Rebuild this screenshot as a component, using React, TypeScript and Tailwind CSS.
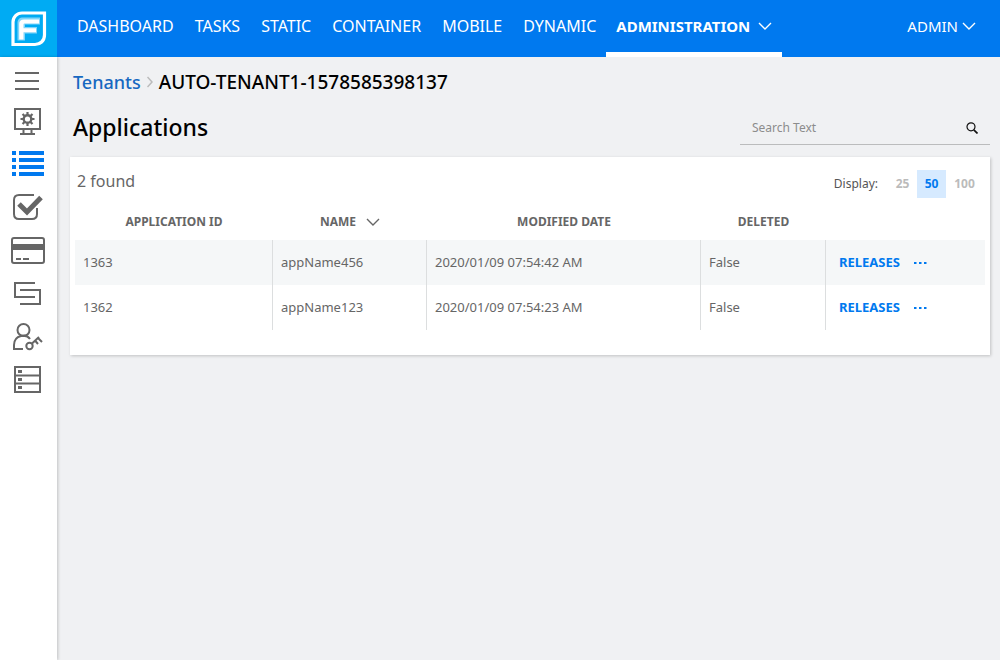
import type { ReactNode } from 'react'

const navItems = ['DASHBOARD', 'TASKS', 'STATIC', 'CONTAINER', 'MOBILE', 'DYNAMIC']

const applications = [
  { id: '1363', name: 'appName456', modified: '2020/01/09 07:54:42 AM', deleted: 'False' },
  { id: '1362', name: 'appName123', modified: '2020/01/09 07:54:23 AM', deleted: 'False' },
]

function Chevron({ className }: { className: string }) {
  return (
    <svg viewBox="0 0 14 8" fill="none" stroke="currentColor" aria-hidden="true" className={className}>
      <path d="M1 1l6 6 6-6" strokeWidth="1.4" />
    </svg>
  )
}

function Logo() {
  return (
    <svg width="36" height="36" viewBox="0 0 36 36" fill="none" aria-hidden="true">
      <path d="M11 2H33.500V24C33.500 30 29 33.500 24 33.500H2V11C2 6 6 2 11 2Z" stroke="#fff" strokeWidth="3.200" />
      <path d="M6.500 29.500V12C6.500 8.500 8.500 6.500 12 6.500H29V13.500H14V16H26V22.500H14V29.500Z" fill="#fff" fillOpacity=".5" />
      <path d="M8.200 28.500V13C8.200 10 9.800 8.500 13 8.500H28V12.500H13.500Q12.500 12.500 12.500 13.500V17.200H25V21.300H12.500V28.500Z" fill="#fff" />
    </svg>
  )
}

function SideIcon({ label, active = false, children }: { label: string; active?: boolean; children: ReactNode }) {
  return (
    <a href="#" aria-label={label} className={`flex h-[43px] w-full items-center justify-center ${active ? 'text-[#0079ef]' : 'text-[#666]'}`}>
      <svg width="36" height="32" viewBox="0 0 36 32" fill="none" stroke="currentColor" strokeWidth="2" aria-hidden="true">
        {children}
      </svg>
    </a>
  )
}

function Sidebar() {
  return (
    <aside className="z-10 flex w-[57px] shrink-0 flex-col items-center bg-white pr-px shadow-[1px_0_3px_rgba(0,0,0,0.2)]">
      <button type="button" aria-label="Toggle menu" className="flex h-[42px] w-full items-center justify-center pt-1.5 pr-0.5 text-[#666]">
        <svg width="24" height="20" viewBox="0 0 24 20" stroke="currentColor" strokeWidth="2" aria-hidden="true">
          <path d="M0 2h24M0 10h24M0 18h24" />
        </svg>
      </button>
      <nav aria-label="Administration" className="flex w-full flex-col">
        <SideIcon label="Settings">
          <path d="M5 4h25v20H5zM13.500 24v5M21.500 24v5M10 29h15" />
          <circle cx="17.500" cy="14" r="3.800" strokeWidth="2.400" />
          <path d="M17.500 7v3.500M17.500 17.500V21M10.500 14h3.500M21 14h3.500M12.550 9.050l2.500 2.500M20 16.500l2.500 2.500M12.550 18.950l2.500-2.500M20 11.500l2.500-2.500" strokeWidth="2.200" />
        </SideIcon>
        <SideIcon label="Tenants" active>
          <g fill="currentColor" stroke="none">
            <path d="M2 3h4v4H2zM9 3h25v4H9zM2 10h4v4H2zM9 10h25v4H9zM2 17h4v4H2zM9 17h25v4H9zM2 24h4v4H2zM9 24h25v4H9z" />
          </g>
        </SideIcon>
        <SideIcon label="Approvals">
          <path d="M24 4H9C6 4 4 6 4 9v14c0 3 2 5 5 5h13c3 0 5-2 5-5v-6" />
          <path d="M9 13l8 8L31 6.500" strokeWidth="5" />
        </SideIcon>
        <SideIcon label="Entitlements">
          <rect x="2" y="4" width="32" height="25" rx="2" />
          <path d="M2 13h32" strokeWidth="6" />
          <path d="M6 25h5M13 25h6" />
        </SideIcon>
        <SideIcon label="Processes">
          <path d="M25 6H5v14h20M10 13h20v14H10" />
        </SideIcon>
        <SideIcon label="Users and permissions">
          <circle cx="13.500" cy="10" r="6" />
          <path d="M13 29H4v-4c0-5 3-8 7-9 4-1 7 0 9 3" />
          <circle cx="19.500" cy="26" r="3.200" />
          <path d="M22 23.500l7-6.500M25 20.500l3 3.500M28 18l4 4" />
        </SideIcon>
        <SideIcon label="Data centers">
          <path d="M5 4h25v25H5zM5 12.500h25M5 20.500h25" />
          <path d="M8 8.500h4M8 16.500h4M8 24.500h4" strokeWidth="3" />
        </SideIcon>
      </nav>
    </aside>
  )
}

function Header() {
  return (
    <header className="flex h-[57px] shrink-0 bg-[#0079ef] text-white">
      <a href="#" aria-label="Home" className="flex w-[57px] shrink-0 items-center justify-center bg-[#00abf3]">
        <Logo />
      </a>
      <nav aria-label="Main" className="flex items-stretch gap-[21px] pb-[5px] pl-5 text-[16px] leading-6">
        {navItems.map((item) => (
          <a key={item} href="#" className="flex items-center">
            {item}
          </a>
        ))}
      </nav>
      <button type="button" className="ml-2.5 flex items-center gap-2 border-b-[5px] border-white px-2.5 text-[15px] font-bold">
        ADMINISTRATION
        <Chevron className="h-2 w-3.5" />
      </button>
      <button type="button" className="ml-auto mr-6 flex items-center gap-1 pb-[5px] text-[15px]">
        ADMIN
        <Chevron className="h-2 w-3.5" />
      </button>
    </header>
  )
}

function ApplicationsTable() {
  return (
    <table className="w-full table-fixed border-separate border-spacing-0 text-[13px] text-[#666]">
      <thead>
        <tr className="h-[37px] text-[12px]">
          <th className="w-[198px] p-0 font-bold">APPLICATION ID</th>
          <th className="w-[154px] p-0 font-bold">
            <button type="button" className="inline-flex items-center gap-2.5 font-bold">
              NAME
              <Chevron className="h-2 w-3.5" />
            </button>
          </th>
          <th className="w-[274px] p-0 font-bold">MODIFIED DATE</th>
          <th className="w-[125px] p-0 font-bold">DELETED</th>
          <th className="w-[159px] p-0" aria-label="Actions" />
        </tr>
      </thead>
      <tbody>
        {applications.map((app) => (
          <tr key={app.id} className="h-[45px] odd:bg-[#f5f7f8]">
            <td className="border-r border-[#dcdedf] px-2 py-0">{app.id}</td>
            <td className="border-r border-[#dcdedf] px-2 py-0">{app.name}</td>
            <td className="border-r border-[#dcdedf] px-2 py-0">{app.modified}</td>
            <td className="border-r border-[#dcdedf] px-2 py-0">{app.deleted}</td>
            <td className="px-[13px] py-0">
              <div className="flex items-center gap-3.5 text-[#0079ef]">
                <a href="#" className="font-bold">RELEASES</a>
                <button type="button" aria-label={`More actions for ${app.name}`}>
                  <svg width="13" height="4" viewBox="0 0 13 4" fill="currentColor" aria-hidden="true">
                    <path d="M0 1h2.500v2H0zM5 1h2.500v2H5zM10 1h2.500v2H10z" />
                  </svg>
                </button>
              </div>
            </td>
          </tr>
        ))}
      </tbody>
    </table>
  )
}

export default function App() {
  return (
    <div className="flex min-h-screen flex-col bg-[#f0f1f3] font-['Noto_Sans',sans-serif]">
      <Header />
      <div className="flex flex-1">
        <Sidebar />
        <main className="min-w-0 flex-1 pl-[13px] pr-2.5">
          <nav aria-label="Breadcrumb" className="flex h-10 items-center gap-1.5 pl-[3px] pt-2.5 text-[18px] font-medium leading-7">
            <a href="#" className="text-[#1668c1]">Tenants</a>
            <svg width="6" height="12" viewBox="0 0 6 12" fill="none" stroke="#bbb" strokeWidth="1.5" aria-hidden="true">
              <path d="M.5 1l4.500 5-4.500 5" />
            </svg>
            <span className="text-[19px] text-black">AUTO-TENANT1-1578585398137</span>
          </nav>
          <div className="flex h-12 items-end justify-between">
            <h1 className="pb-0.5 pl-[3px] text-[23px] font-medium leading-8 text-black">Applications</h1>
            <label className="flex h-[34px] w-[250px] items-center border-b border-[#bbbcbd] pl-3 pr-3">
              <input type="text" aria-label="Search text" placeholder="Search Text" className="min-w-0 flex-1 bg-transparent text-[12px] text-[#333] outline-none placeholder:text-[#8c8c8c]" />
              <svg width="12" height="12" viewBox="0 0 12 12" fill="none" stroke="#111" aria-hidden="true">
                <circle cx="5" cy="4.800" r="4" strokeWidth="1.200" />
                <path d="M7.800 7.800l3.700 3.700" strokeWidth="1.700" />
              </svg>
            </label>
          </div>
          <section className="mt-3 bg-white px-[5px] pb-[25px] shadow-[1px_1px_3px_rgba(0,0,0,0.2)]">
            <div className="flex h-[46px] justify-between pl-0.5 pr-0.5">
              <p className="pt-3 text-[16px] leading-6 text-[#666]">2 found</p>
              <div className="flex items-center pt-2 text-[12px] font-bold text-[#bbb]">
                <span className="mr-2.5 font-normal text-[#555]">Display:</span>
                <button type="button" className="h-7 w-[29px]">25</button>
                <button type="button" aria-pressed="true" className="h-7 w-[29px] bg-[#d6eaff] text-[#0079ef]">50</button>
                <button type="button" className="h-7 w-[37px]">100</button>
              </div>
            </div>
            <ApplicationsTable />
          </section>
        </main>
      </div>
    </div>
  )
}
